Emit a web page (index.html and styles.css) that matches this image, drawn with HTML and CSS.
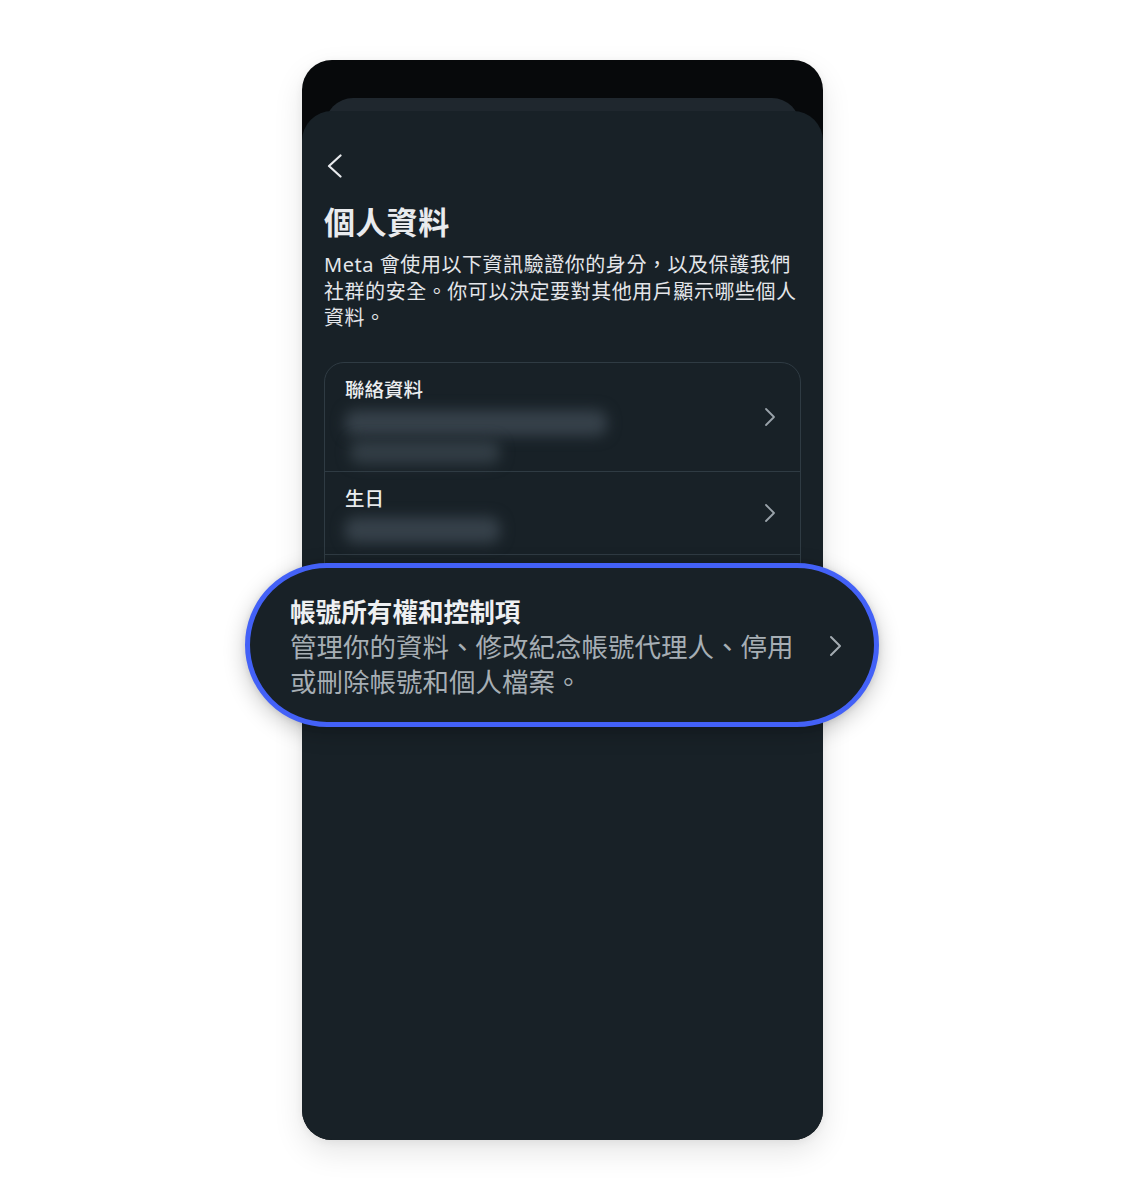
FILE: index.html
```
<!DOCTYPE html>
<html lang="zh-Hant">
<head>
<meta charset="utf-8">
<title>個人資料</title>
<link rel="stylesheet" href="styles.css">
</head>
<body>
<div class="stage">
  <div class="phone">
    <div class="back-sheet"></div>
    <div class="sheet">
      <div class="back-btn">
        <svg width="24" height="24" viewBox="0 0 24 24"><path d="M16.5 1.5 L5 12 L16.5 22.5" fill="none" stroke="#e8eaed" stroke-width="2.2" stroke-linecap="round" stroke-linejoin="round"/></svg>
      </div>
      <h1 class="title">個人資料</h1>
      <p class="desc">Meta 會使用以下資訊驗證你的身分，以及保護我們社群的安全。你可以決定要對其他用戶顯示哪些個人資料。</p>
      <div class="card">
        <div class="row row-contact">
          <div class="row-body">
            <div class="row-label">聯絡資料</div>
            <div class="blur blur-a"></div>
            <div class="blur blur-b"></div>
          </div>
          <svg class="chev" width="12" height="20" viewBox="0 0 12 20"><path d="M2 2 L10 10 L2 18" fill="none" stroke="#9aa3aa" stroke-width="1.8" stroke-linecap="round" stroke-linejoin="round"/></svg>
        </div>
        <div class="row row-birthday">
          <div class="row-body">
            <div class="row-label">生日</div>
            <div class="blur blur-c"></div>
          </div>
          <svg class="chev" width="12" height="20" viewBox="0 0 12 20"><path d="M2 2 L10 10 L2 18" fill="none" stroke="#9aa3aa" stroke-width="1.8" stroke-linecap="round" stroke-linejoin="round"/></svg>
        </div>
        <div class="row row-hidden"></div>
      </div>
    </div>
  </div>
  <div class="pill">
    <div class="pill-text">
      <div class="pill-title">帳號所有權和控制項</div>
      <div class="pill-desc">管理你的資料、修改紀念帳號代理人、停用或刪除帳號和個人檔案。</div>
    </div>
    <svg class="pill-chev" width="14" height="22" viewBox="0 0 14 22"><path d="M2 2 L11 11 L2 20" fill="none" stroke="#a3abb1" stroke-width="2" stroke-linecap="round" stroke-linejoin="round"/></svg>
  </div>
</div>
</body>
</html>
```
FILE: styles.css
```
* { box-sizing: border-box; }
html, body { margin: 0; padding: 0; background: #ffffff; }
body {
  font-family: "Noto Sans", "Noto Sans CJK TC", sans-serif;
  width: 1125px;
  height: 1200px;
  overflow: hidden;
}
.stage {
  position: relative;
  padding-top: 60px;
  height: 1200px;
}
.phone {
  width: 521px;
  height: 1080px;
  margin: 0 auto;
  background: #07090b;
  border-radius: 30px;
  overflow: hidden;
  padding-top: 38px;
  box-shadow: 0 12px 30px rgba(0,0,0,0.10), 0 2px 8px rgba(0,0,0,0.06);
  display: flex;
  flex-direction: column;
}
.back-sheet {
  height: 40px;
  margin: 0 23px -27px;
  background: #1f272e;
  border-radius: 28px 28px 0 0;
  flex: none;
}
.sheet {
  position: relative;
  flex: 1;
  background: #182127;
  border-radius: 30px 30px 0 0;
  padding: 43px 22px 0;
}
.back-btn {
  width: 24px;
  height: 24px;
}
.back-btn svg { display: block; }
.title {
  margin: 24px 0 0;
  font-size: 31px;
  line-height: 40px;
  font-weight: 700;
  color: #e9ebee;
  letter-spacing: 0.4px;
}
.desc {
  margin: 10px 0 0;
  font-size: 20px;
  line-height: 26.5px;
  color: #e4e6ea;
  letter-spacing: 0.55px;
}
.card {
  margin-top: 30px;
  border: 1px solid #2f3b43;
  border-radius: 20px;
  overflow: hidden;
}
.row {
  display: flex;
  align-items: center;
  padding: 0 24px 0 20px;
  border-top: 1px solid #2f3b43;
}
.row:first-child { border-top: none; }
.row-body { flex: 1; }
.row-contact { height: 108px; padding-top: 4px; align-items: flex-start; }
.row-contact .row-body { padding-top: 10px; }
.row-contact .chev { margin-top: 40px; }
.row-birthday { height: 83px; align-items: flex-start; }
.row-birthday .row-body { padding-top: 14px; }
.row-birthday .chev { margin-top: 31px; }
.row-hidden { height: 150px; }
.row-label {
  font-size: 19.5px;
  line-height: 26px;
  color: #eceef0;
  font-weight: 500;
}
.blur {
  background: #36414a;
  border-radius: 10px;
  filter: blur(7px);
}
.blur-a { width: 262px; height: 26px; margin-top: 7px; }
.blur-b { width: 150px; height: 24px; margin-top: 4px; margin-left: 5px; background: #323d45; }
.blur-c { width: 155px; height: 26px; margin-top: 5px; }
.chev { flex: none; display: block; }
.pill {
  position: absolute;
  left: 245px;
  top: 563px;
  width: 634px;
  height: 164px;
  border: 5px solid #4361f7;
  border-radius: 82px;
  background: #182127;
  display: flex;
  align-items: center;
  justify-content: space-between;
  padding: 5px 31px 0 40px;
  box-shadow: 0 6px 22px rgba(0,0,0,0.22), 0 1px 6px rgba(0,0,0,0.10);
}
.pill-text { width: 520px; }
.pill-title {
  font-size: 25.6px;
  line-height: 34px;
  font-weight: 700;
  color: #eef0f2;
}
.pill-desc {
  font-size: 26.5px;
  line-height: 35px;
  color: #a6aeb4;
}
.pill-chev { flex: none; display: block; margin-top: -4px; }
```
